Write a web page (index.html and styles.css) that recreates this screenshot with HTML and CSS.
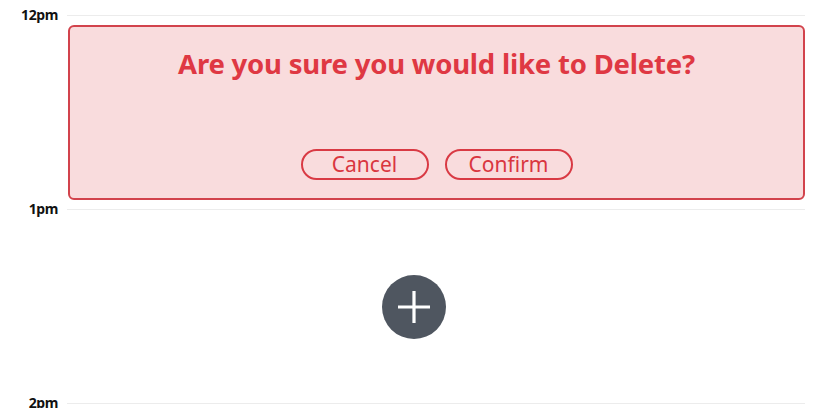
FILE: index.html
```html
<!DOCTYPE html>
<html>
<head>
<meta charset="utf-8">
<link rel="stylesheet" href="styles.css">
</head>
<body>
<div class="day">
  <div class="hour"><span class="label">12pm</span><span class="line"></span></div>
  <div class="slot slot-confirm">
    <div class="confirm">
      <h2 class="confirm-title">Are you sure you would like to Delete?</h2>
      <div class="actions">
        <button class="btn">Cancel</button>
        <button class="btn">Confirm</button>
      </div>
    </div>
  </div>
  <div class="hour hour-2"><span class="label">1pm</span><span class="line"></span></div>
  <div class="slot-add">
    <button class="add" aria-label="Add">
      <svg width="34" height="34" viewBox="0 0 34 34"><path d="M17 1v32M1 17h32" stroke="#fff" stroke-width="3.2" fill="none"/></svg>
    </button>
  </div>
  <div class="hour"><span class="label">2pm</span><span class="line"></span></div>
</div>
</body>
</html>
```
FILE: styles.css
```css
html, body { margin: 0; padding: 0; background: #fff; }
body { font-family: "Noto Sans", "Open Sans", sans-serif; overflow: hidden; height: 408px; }
.day { padding-top: 8px; }
.hour { display: flex; align-items: center; height: 14px; margin-right: 22px; }
.label { width: 58px; text-align: right; font-size: 14px; font-weight: 700; color: #111; margin-right: 9px; line-height: 14px; letter-spacing: -0.4px; }
.line { flex: 1; border-top: 1px solid #ececec; }
.slot { margin-left: 68px; margin-right: 22px; }
.slot-confirm { padding-top: 3px; padding-bottom: 2px; }
.confirm { box-sizing: border-box; height: 175px; border: 2px solid #d2434c; border-radius: 6px; background: #f9dcdd; display: flex; flex-direction: column; align-items: center; }
.confirm-title { margin: 19px 0 0; font-size: 27.5px; font-weight: 700; color: #df3843; letter-spacing: -0.2px; line-height: 36px; }
.actions { margin-top: auto; margin-bottom: 18px; display: flex; gap: 16px; }
.btn { box-sizing: border-box; width: 128px; height: 31px; border: 2px solid #d93a44; border-radius: 16px; background: transparent; color: #d9363f; font-family: inherit; font-size: 21px; line-height: 25px; padding: 0; }
.slot-add { height: 180px; display: flex; align-items: center; justify-content: center; }
.add { width: 64px; height: 64px; border-radius: 50%; border: none; background: #4f5660; display: flex; align-items: center; justify-content: center; padding: 0; margin-top: 2px; }
.add svg { display: block; }
```
